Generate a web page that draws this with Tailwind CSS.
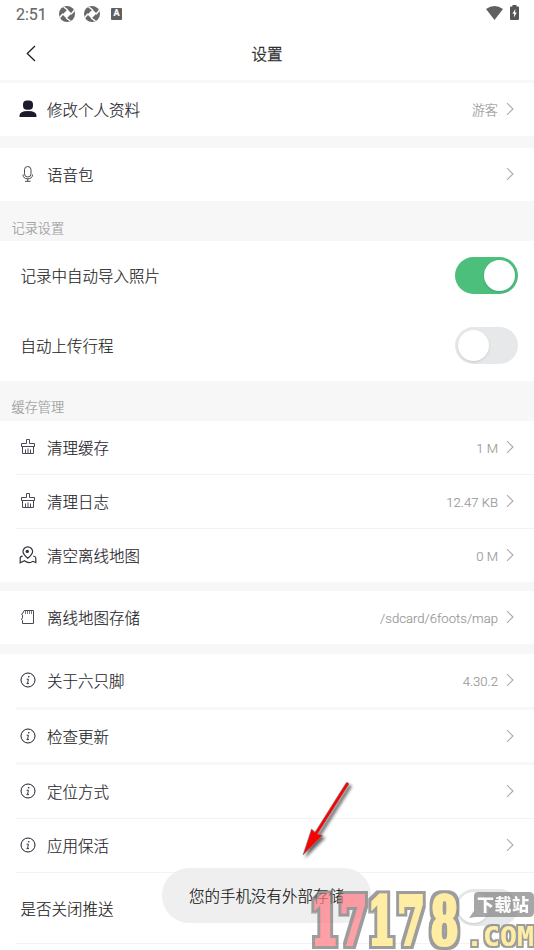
<!DOCTYPE html>
<html lang="zh-CN">
<head>
<meta charset="utf-8">
<title>设置</title>
<script src="https://cdn.jsdelivr.net/npm/@tailwindcss/browser@4"></script>
</head>
<body class="bg-white">
<svg class="hidden">
  <symbol id="chev" viewBox="0 0 8 14"><path d="M1 1.2 7 7 1 12.8" fill="none" stroke="#aaaaad" stroke-width="1.1"/></symbol>
  <symbol id="info" viewBox="0 0 16 16"><circle cx="8" cy="8" r="7" fill="none" stroke="#1f1e2b" stroke-width="1"/><circle cx="8.7" cy="4.8" r=".8" fill="#1f1e2b"/><path d="M6.6 7.2H8.4L7.5 11.6H9M6.5 11.6H7.5" fill="none" stroke="#1f1e2b" stroke-width=".9"/></symbol>
  <symbol id="broom" viewBox="0 0 16 16"><path d="M6.5 4.5V.5H9.5V4.5H14.5V7.5H1.5V4.5ZM2.5 7.5V14.5H13.5V7.5M5.5 14.5V10.5M8 14.5V9.5M10.5 14.5V10.5" fill="none" stroke="#4a4953" stroke-width="1"/></symbol>
  <symbol id="swirl" viewBox="0 0 16 16"><circle cx="8" cy="8" r="8" fill="#686868"/><path d="M8.5 3.5 12.5 7.5 7.5 12.5 3.5 8.5Z" fill="#fff"/><path d="M8.8 4 4.6 1M12 8.2 15.2 4.4M7.2 12 11.4 15M4 7.8.8 11.6" stroke="#fff" stroke-width="1.5"/></symbol>
</svg>
<main class="relative flex h-[950px] w-[534px] flex-col overflow-hidden bg-white font-['Roboto','Noto_Sans_CJK_SC',sans-serif] text-[15.5px] font-light text-[#1f1e2b] [-webkit-text-stroke:0.15px]">
  <div class="flex h-7 shrink-0 items-center pl-4 pr-[15px] text-[16px] font-normal text-[#686868]">
    <span class="w-[43px] pt-px">2:51</span>
    <svg class="mb-px size-4"><use href="#swirl"/></svg>
    <svg class="mb-px ml-[9px] size-4"><use href="#swirl"/></svg>
    <span class="mb-px ml-[11px] flex h-3 w-[11px] items-center justify-center rounded-[1px] bg-[#606060] text-[9px] font-bold text-white">A</span>
    <svg class="mb-[3px] ml-auto h-[14px] w-[17px]" viewBox="0 0 17 14"><path d="M0 3Q8.5-2.8 17 3L8.5 14Z" fill="#606060"/></svg>
    <svg class="mb-[3px] ml-[7px] h-[15px] w-[9px]" viewBox="0 0 9 15"><path d="M2.5 0H6.5V1.5H8Q9 1.5 9 2.5V14Q9 15 8 15H1Q0 15 0 14V2.5Q0 1.5 1 1.5H2.5Z" fill="#555"/><path d="M5.5 3.8 2.4 8.8H4.2L3.8 12.5 6.8 7.5H5Z" fill="#fff"/></svg>
  </div>
  <header class="relative flex h-[52px] shrink-0 items-center justify-center text-[#222]">
    <svg class="absolute left-[26px] top-[17px] h-[17px] w-[10px]" viewBox="0 0 10 17"><path d="M9 1 1.3 8.5 9 16" fill="none" stroke="#222" stroke-width="1.3"/></svg>
    <h1 class="pt-1 font-light [-webkit-text-stroke:0.3px]">设置</h1>
  </header>
  <div class="h-[3px] shrink-0 bg-[#f7f7f7]"></div>
  <div class="flex h-[53px] shrink-0 items-center pl-[19px] pr-5">
    <svg class="mb-[2px] h-[18px] w-[18px]" viewBox="0 0 18 18"><rect x="4" y="0.5" width="10" height="9.3" rx="4" fill="#1b1a2b"/><path d="M.6 17Q-.6 11.2 9 11.1 18.6 11.2 17.4 17Z" fill="#1b1a2b"/></svg>
    <span class="ml-[10px] pt-1">修改个人资料</span>
    <span class="ml-auto pt-[2px] text-[13.2px] text-[#999]">游客</span>
    <svg class="mb-[2px] ml-2 h-[14px] w-2"><use href="#chev"/></svg>
  </div>
  <div class="h-3 shrink-0 bg-[#f7f7f7]"></div>
  <div class="flex h-[53px] shrink-0 items-center pl-[19px] pr-5">
    <svg class="mb-px h-[18px] w-[18px]" viewBox="0 0 18 18"><rect x="5.5" y="1.5" width="6.5" height="10.5" rx="3.2" fill="none" stroke="#4a4953"/><path d="M4 9.5Q4 13.8 8.75 13.8T13.5 9.5M8.75 13.8V16.3M6 16.3H11.5" fill="none" stroke="#4a4953"/></svg>
    <span class="ml-[10px] pt-[5px]">语音包</span>
    <svg class="mb-px ml-auto h-[14px] w-2"><use href="#chev"/></svg>
  </div>
  <div class="flex h-10 shrink-0 items-end bg-[#f7f7f7] pb-[2px] pl-[11.5px] text-[13.2px] text-[#999]">记录设置</div>
  <div class="flex h-[70px] shrink-0 items-center justify-between pl-[20.5px] pr-4 text-[#222]">
    <span class="pt-1">记录中自动导入照片</span>
    <span class="mb-px flex h-[37px] w-[63.5px] items-center justify-end rounded-full bg-[#4cbf7d] pr-[3px]"><i class="size-[31px] rounded-full bg-white shadow-sm"></i></span>
  </div>
  <div class="flex h-[70px] shrink-0 items-center justify-between pl-[20.5px] pr-4 text-[#222]">
    <span class="pt-1">自动上传行程</span>
    <span class="mb-[2px] flex h-[37px] w-[63.5px] items-center rounded-full bg-[#e7e8ea] pl-[3px]"><i class="size-[31px] rounded-full bg-white shadow-sm"></i></span>
  </div>
  <div class="flex h-10 shrink-0 items-end bg-[#f7f7f7] pb-[3px] pl-[11.5px] text-[13.2px] text-[#999]">缓存管理</div>
  <div class="flex h-[53px] shrink-0 items-center pl-5 pr-5">
    <svg class="mb-[2px] size-4"><use href="#broom"/></svg><span class="ml-[11px] pt-1">清理缓存</span>
    <span class="ml-auto pt-[2px] text-[13.1px] text-[#999]">1 M</span><svg class="mb-[2px] ml-2 h-[14px] w-2"><use href="#chev"/></svg>
  </div>
  <div class="ml-4 h-px shrink-0 bg-[#f3f3f3]"></div>
  <div class="flex h-[53px] shrink-0 items-center pl-5 pr-5">
    <svg class="mb-[2px] size-4"><use href="#broom"/></svg><span class="ml-[11px] pt-1">清理日志</span>
    <span class="ml-auto pt-[2px] text-[13.1px] text-[#999]">12.47 KB</span><svg class="mb-[2px] ml-2 h-[14px] w-2"><use href="#chev"/></svg>
  </div>
  <div class="ml-4 h-px shrink-0 bg-[#f3f3f3]"></div>
  <div class="flex h-[53px] shrink-0 items-center pl-[19px] pr-5">
    <svg class="mb-px h-[18px] w-[18px]" viewBox="0 0 18 18"><path d="M8.8 12.2Q4 8.5 4 5.6A4.8 4.8 0 0 1 13.6 5.6Q13.6 8.5 8.8 12.2ZM3.6 10.2Q1.2 10.5 1.2 12V16.8L5.5 14.8Q9 17.5 12 16.3L14 15.3 16.8 16.5V12Q16.5 10.3 14.2 10" fill="none" stroke="#33323d" stroke-width="1.2"/><circle cx="8.3" cy="5.4" r="1.7" fill="#33323d"/></svg>
    <span class="ml-[10px] pt-1">清空离线地图</span>
    <span class="ml-auto pt-[2px] text-[13.1px] text-[#999]">0 M</span><svg class="mb-[2px] ml-2 h-[14px] w-2"><use href="#chev"/></svg>
  </div>
  <div class="h-[9px] shrink-0 bg-[#f7f7f7]"></div>
  <div class="flex h-[53px] shrink-0 items-center pl-5 pr-5">
    <svg class="mb-px size-4" viewBox="0 0 16 16"><path d="M4.2 1.5H13.5V14.5H2.5V11.5L1.5 10.2 2.5 8.8V6.2L1.5 5 3 4Z" fill="none" stroke="#4a4953"/><path d="M5.5 2V5M7.5 2V5M9.5 2V5M11.5 2V5" stroke="#777" stroke-width="1"/></svg>
    <span class="ml-[11px] pt-1">离线地图存储</span>
    <span class="ml-auto pt-[2px] text-[13.1px] text-[#999]">/sdcard/6foots/map</span><svg class="mb-[2px] ml-2 h-[14px] w-2"><use href="#chev"/></svg>
  </div>
  <div class="h-[10px] shrink-0 bg-[#f7f7f7]"></div>
  <div class="flex h-[53px] shrink-0 items-center pl-5 pr-5">
    <svg class="mb-[2px] size-4"><use href="#info"/></svg><span class="ml-[11px] pt-1">关于六只脚</span>
    <span class="ml-auto pt-[2px] text-[13.1px] text-[#999]">4.30.2</span><svg class="mb-[2px] ml-2 h-[14px] w-2"><use href="#chev"/></svg>
  </div>
  <div class="ml-4 h-[3px] shrink-0 bg-[#f7f7f7]"></div>
  <div class="flex h-[52px] shrink-0 items-center pl-5 pr-5">
    <svg class="mb-px size-4"><use href="#info"/></svg><span class="ml-[11px] pt-[5px]">检查更新</span>
    <svg class="mb-px ml-auto h-[14px] w-2"><use href="#chev"/></svg>
  </div>
  <div class="ml-4 h-[3px] shrink-0 bg-[#f7f7f7]"></div>
  <div class="flex h-[53px] shrink-0 items-center pl-5 pr-5">
    <svg class="mb-px size-4"><use href="#info"/></svg><span class="ml-[11px] pt-1">定位方式</span>
    <svg class="mb-px ml-auto h-[14px] w-2"><use href="#chev"/></svg>
  </div>
  <div class="ml-4 h-px shrink-0 bg-[#f3f3f3]"></div>
  <div class="flex h-[53px] shrink-0 items-center pl-5 pr-5">
    <svg class="mb-px size-4"><use href="#info"/></svg><span class="ml-[11px] pt-[5px]">应用保活</span>
    <svg class="mb-px ml-auto h-[14px] w-2"><use href="#chev"/></svg>
  </div>
  <div class="ml-4 h-px shrink-0 bg-[#f3f3f3]"></div>
  <div class="flex h-[70px] shrink-0 items-center justify-between pl-[20.5px] pr-4 text-[#222]">
    <span class="pt-[5px]">是否关闭推送</span>
    <span class="mb-px flex h-[37px] w-[63.5px] items-center rounded-full bg-[#e7e8ea] pl-[3px]"><i class="size-[31px] rounded-full bg-white shadow-sm"></i></span>
  </div>
  <div class="ml-4 h-px shrink-0 bg-[#f3f3f3]"></div>

  <div class="absolute left-[162px] top-[868px] flex h-[55px] w-[209px] items-center justify-center rounded-[27px] bg-[#eeeeee]/95 pt-[5px] text-[#111]">您的手机没有外部存储</div>

  <svg class="absolute left-[290px] top-[770px] h-[180px] w-[244px] [-webkit-text-stroke:initial]" viewBox="290 770 244 180">
    <defs>
      <filter id="sh" x="-30%" y="-30%" width="170%" height="170%"><feDropShadow dx="2.5" dy="2.5" stdDeviation="1.5" flood-color="#000" flood-opacity=".6"/></filter>
      <filter id="edge" filterUnits="userSpaceOnUse" x="290" y="880" width="244" height="70"><feMorphology in="SourceAlpha" operator="dilate" radius="3" result="d"/><feFlood flood-color="#787878"/><feComposite in2="d" operator="in" result="o"/><feMerge><feMergeNode in="o"/><feMergeNode in="SourceGraphic"/></feMerge></filter>
      <filter id="edge2" filterUnits="userSpaceOnUse" x="290" y="880" width="244" height="70"><feMorphology in="SourceAlpha" operator="dilate" radius="2" result="d"/><feFlood flood-color="#787878"/><feComposite in2="d" operator="in" result="o"/><feMerge><feMergeNode in="o"/><feMergeNode in="SourceGraphic"/></feMerge></filter>
    </defs>
    <g filter="url(#sh)"><path d="M346.2 782.7Q348 782 349 784L317.5 834 322.5 835.3 303 855 311.5 829 315 832.3Z" fill="#fb0505" stroke="#777" stroke-width=".6"/></g>
    <g opacity=".72">
      <g filter="url(#edge)">
        <g transform="scale(.6 1)" font-family="'DejaVu Serif',serif" font-weight="700" font-size="66" stroke-width="4" stroke-linejoin="miter">
          <text y="944" x="518 566" fill="#ff7c86" stroke="#ff7c86">17</text>
          <text y="944" x="613 662 718" fill="#ffe782" stroke="#ffe782">178</text>
        </g>
      </g>
      <g filter="url(#edge2)">
        <text x="466" y="946" font-family="'DejaVu Sans Mono',monospace" font-weight="700" font-size="27" textLength="68" lengthAdjust="spacingAndGlyphs" fill="#ffe782"><tspan>.COM</tspan></text>
      </g>
      <path d="M478 892H529Q534 892 534 897V912Q534 917 529 917H475L469 918 474 911V896Q474 892 478 892Z" fill="#858585"/>
      <text x="477" y="911" font-family="'Noto Sans CJK SC',sans-serif" font-weight="900" font-size="17" textLength="52" fill="#fff">下载站</text>
    </g>
  </svg>
</main>
</body>
</html>
